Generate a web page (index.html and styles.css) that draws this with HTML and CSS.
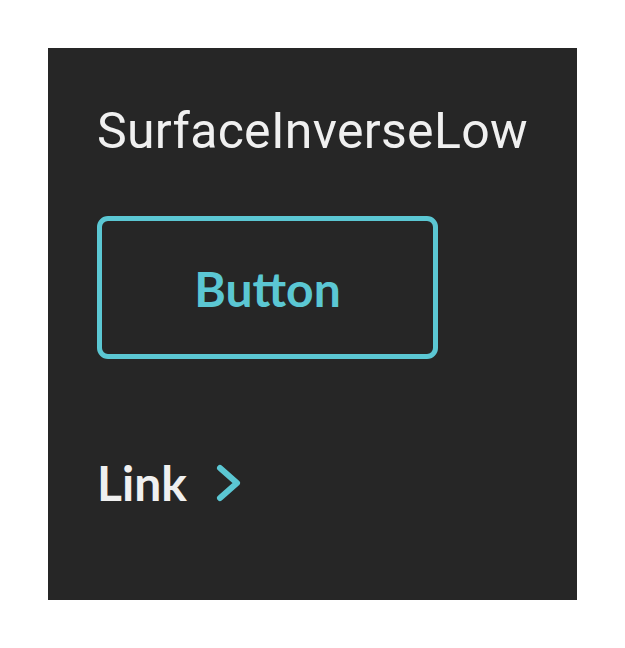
FILE: index.html
```html
<!DOCTYPE html>
<html>
<head>
<meta charset="utf-8">
<link rel="stylesheet" href="styles.css">
</head>
<body>
<div class="panel">
  <div class="title">SurfaceInverseLow</div>
  <button class="btn">Button</button>
  <a class="link" href="#">Link
    <svg class="chev" width="28" height="40" viewBox="0 0 28 40"><path d="M5 5 L22 20 L5 35" fill="none" stroke="#5bc7d3" stroke-width="6" stroke-linecap="round" stroke-linejoin="round"/></svg>
  </a>
</div>
</body>
</html>
```
FILE: styles.css
```css
html, body { margin: 0; padding: 0; background: #ffffff; }
body { padding: 48px; }
.panel {
  width: 529px;
  height: 552px;
  box-sizing: border-box;
  background: #262626;
  padding: 58px 0 0 49px;
  display: flex;
  flex-direction: column;
  align-items: flex-start;
}
.title {
  font-family: Roboto, sans-serif;
  font-size: 50px;
  line-height: 50px;
  color: #f0f0f0;
  letter-spacing: 0.3px;
}
.btn {
  margin-top: 60px;
  width: 341px;
  height: 143px;
  box-sizing: border-box;
  background: transparent;
  border: 5px solid #5bc7d3;
  border-radius: 11px;
  color: #5bc7d3;
  font-family: Lato, sans-serif;
  font-weight: 700;
  font-size: 48px;
  padding: 2px 0 0 0;
}
.link {
  margin-top: 100px;
  display: flex;
  align-items: center;
  gap: 28px;
  color: #f0f0f0;
  text-decoration: none;
  font-family: Lato, sans-serif;
  font-weight: 700;
  font-size: 48px;
  line-height: 48px;
}
.chev { display: block; }
```
